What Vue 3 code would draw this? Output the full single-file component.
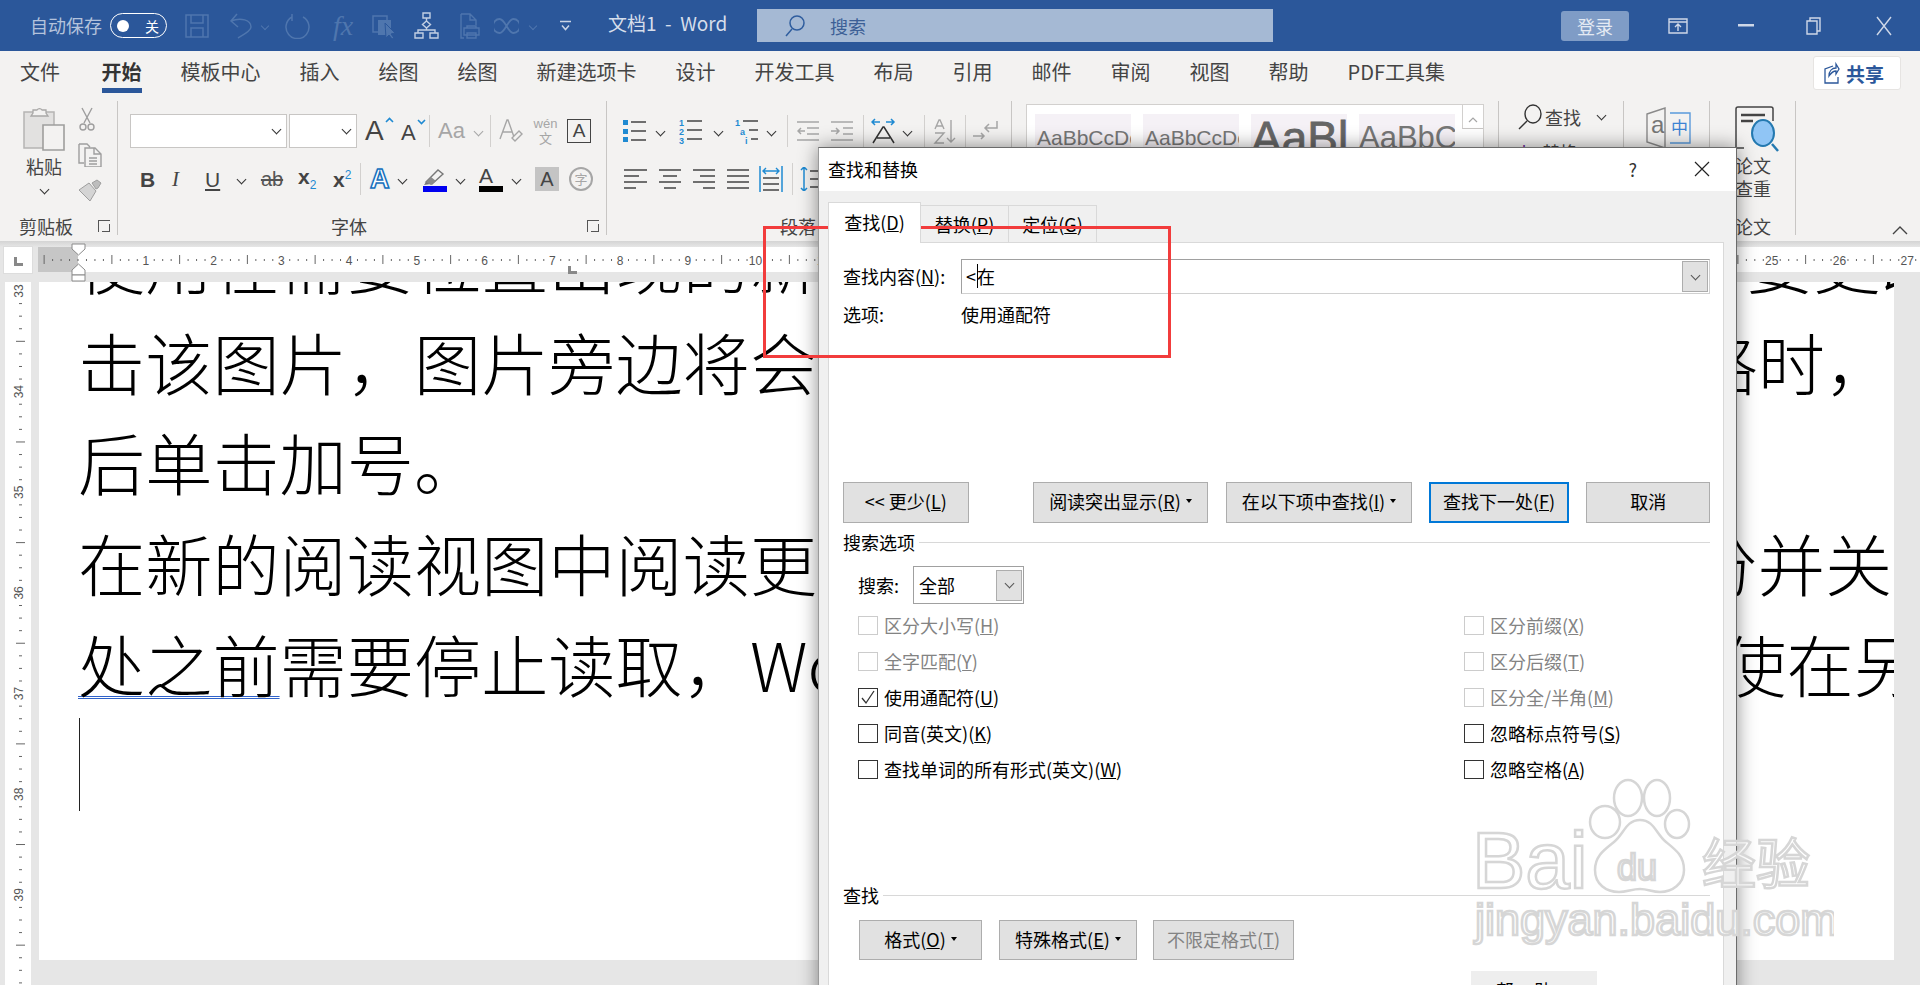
<script setup>
const tabs = ["文件", "开始", "模板中心", "插入", "绘图", "绘图", "新建选项卡", "设计", "开发工具", "布局", "引用", "邮件", "审阅", "视图", "帮助", "PDF工具集"];

// ruler ticks, 8 per unit; the number sits on the unit and the long tick halfway
const hTicks = [];
for (let k = -4; k < 222; k++) {
	hTicks.push({ k, x: 40 + (k * 67.75) / 8, num: k % 8 === 0 && k > 0 ? k / 8 : null, long: Math.abs(k % 8) === 4 });
}
const vTicks = [];
for (let k = -1; k < 56; k++) {
	vTicks.push({ k, y: 9 + k * 12.58, num: k % 8 === 0 ? 33 + k / 8 : null, long: Math.abs(k % 8) === 4 });
}

const options = [
	{ text: "区分大小写", key: "H", off: true },
	{ text: "区分前缀", key: "X", off: true },
	{ text: "全字匹配", key: "Y", off: true },
	{ text: "区分后缀", key: "T", off: true },
	{ text: "使用通配符", key: "U", checked: true },
	{ text: "区分全/半角", key: "M", off: true },
	{ text: "同音(英文)", key: "K" },
	{ text: "忽略标点符号", key: "S" },
	{ text: "查找单词的所有形式(英文)", key: "W" },
	{ text: "忽略空格", key: "A" },
];
</script>

<template>
	<div class="word">
		<header class="titlebar">
			<span class="autosave">自动保存</span>
			<span class="toggle"><i class="knob"></i><b>关</b></span>
			<div class="qat">
				<svg width="24" height="24" viewBox="0 0 24 24" fill="none" stroke="#4f76ae" stroke-width="1.5"><path d="M1 1h22v22H1zM6 1v8h12V1M6 23v-9h12v9" /></svg>
				<svg width="24" height="26" viewBox="0 0 24 26" fill="none" stroke="#4f76ae" stroke-width="1.5"><path d="M8 1 2 8l7 6M2 8c10-4 20-1 20 6 0 4-8 8-13 11" /></svg>
				<i class="chev dim"></i>
				<svg width="25" height="26" viewBox="0 0 25 26" fill="none" stroke="#4f76ae" stroke-width="1.5"><path d="M7 1v7M7 4a11.500 11.500 0 1 0 11 0" /></svg>
				<span class="fx">fx</span>
				<svg width="24" height="26" viewBox="0 0 24 26" fill="none"><path d="M1 3h14v16H1z" stroke="#4f76ae" stroke-width="1.5" /><path d="M6 7h13v15H6z" fill="#4f76ae" /><path d="m13 10 10 10-4 1 3 4-2 1-3-4-3 3z" fill="#4f76ae" stroke="#2b579a" /></svg>
				<svg width="25" height="27" viewBox="0 0 25 27" fill="none" stroke="#c2cfe3" stroke-width="1.4"><path d="M9 1h7v5H9zM12.500 6v3M12.500 9l4 3.500-4 3.500-4-3.500zM12.500 16v2M4 21v-3h17v3M1 21h8v5H1zM16 21h8v5h-8z" /></svg>
				<svg width="22" height="26" viewBox="0 0 22 26" fill="none" stroke="#4f76ae" stroke-width="1.4"><path d="M1 1h9l6 6v5M1 1v24h3M10 1v6h6M7 15v-2h9v2M4 15h15v7H4zM7 20h9v5H7z" /></svg>
				<svg width="25" height="20" viewBox="0 0 25 20" fill="none" stroke="#4f76ae" stroke-width="1.8"><path d="M12.500 10C9 4 7.500 3 5.500 3a6.500 7 0 0 0 0 14c2 0 3.500-1 7-7s5-7 7-7a6.500 7 0 0 1 0 14c-2 0-3.500-1-7-7z" /></svg>
				<i class="chev dim"></i>
				<svg width="13" height="12" viewBox="0 0 13 12" fill="none" stroke="#cbd5e6" stroke-width="1.5"><path d="M1 1.500h11M3 5.500l3.500 4 3.500-4" /></svg>
			</div>
			<span class="doc-name">文档1&nbsp; -&nbsp; Word</span>
			<div class="searchbox">
				<svg width="20" height="22" viewBox="0 0 20 22" fill="none" stroke="#2f5d9e" stroke-width="1.5"><ellipse cx="12" cy="8" rx="7" ry="7" /><path d="M7 14 1 21" /></svg>
				<span>搜索</span>
			</div>
			<span class="login">登录</span>
			<div class="winbtns">
				<svg width="20" height="16" viewBox="0 0 20 16" fill="none" stroke="#cfd8e8" stroke-width="1.4"><path d="M1 1h18v14H1zM1 4h18M10 13V6.500M7 9l3-3 3 3" /></svg>
				<svg width="16" height="3" viewBox="0 0 16 3"><path d="M0 0h16v2.500H0z" fill="#cfd8e8" /></svg>
				<svg width="16" height="18" viewBox="0 0 16 18" fill="none" stroke="#cfd8e8" stroke-width="1.4"><path d="M1 4h10v13H1zM4 4V1h10v13h-3" /></svg>
				<svg width="16" height="20" viewBox="0 0 16 20" fill="none" stroke="#cfd8e8" stroke-width="1.4"><path d="m1 1 14 18M15 1 1 19" /></svg>
			</div>
		</header>

		<nav class="tabs">
			<span v-for="(t, i) in tabs" :key="i" class="tab" :class="{ active: t === '开始' }">{{ t }}</span>
			<span class="share">
				<svg width="16" height="24" viewBox="0 0 16 24" fill="none" stroke="#2b579a" stroke-width="1.3"><path d="M9 5 1 8v14h13v-6M5 15c0-5 3-8 7-8V3l3 5-3 5V10c-3 0-5 2-7 5z" /></svg>
				<b>共享</b>
			</span>
		</nav>

		<section class="ribbon">
			<div class="group g-clip">
				<div class="clip-body">
					<div class="paste">
						<svg width="42" height="45" viewBox="0 0 42 45" fill="none"><path d="M1 6h30v36H1z" fill="#e2e1e0" stroke="#b5b4b3" stroke-width="1.5" /><path d="M10 7V4h4a3 3 0 0 1 5 0h4v3l2 3H8z" fill="#f3f2f1" stroke="#a9a8a7" stroke-width="1.3" /><path d="M20 19h21v25H20z" fill="#f3f2f1" stroke="#9f9e9d" stroke-width="1.6" /></svg>
						<span class="paste-label">粘贴</span>
						<i class="chev"></i>
					</div>
					<div class="clip-tools">
						<svg width="18" height="24" viewBox="0 0 18 24" fill="none" stroke="#9e9e9e" stroke-width="1.4"><path d="M4 1l8 15M14 1 6 16" /><circle cx="5" cy="20" r="3" /><circle cx="13" cy="20" r="3" /></svg>
						<svg width="24" height="24" viewBox="0 0 24 24" fill="none" stroke="#9e9e9e" stroke-width="1.4"><path d="M1 1h8l3 3M1 1v19h5M7 5h10l6 6v13H7zM16 5v6h7M11 15h8M11 18h8M11 21h8" /></svg>
						<svg width="24" height="23" viewBox="0 0 24 23" fill="#bdbdbd" stroke="#9e9e9e" stroke-width="1"><path d="M1 11 11 4l7 8-6 10z" fill="#d4d4d4" /><path d="m14 4 5-3 4 3-3 5-2 1z" /></svg>
					</div>
				</div>
				<div class="glabel"><span class="gtext">剪贴板</span><i class="launcher"></i></div>
			</div>

			<div class="group g-font">
				<div class="font-row1">
					<span class="combo"><i class="chev"></i></span>
					<span class="combo"><i class="chev"></i></span>
					<span class="grow"><span class="glyph big">A</span><svg width="9" height="6" viewBox="0 0 9 6" fill="none" stroke="#1f8ad2" stroke-width="1.6"><path d="m1 5 3.500-3.500L8 5" /></svg></span>
					<span class="grow"><span class="glyph mid">A</span><svg width="9" height="6" viewBox="0 0 9 6" fill="none" stroke="#1f8ad2" stroke-width="1.6"><path d="m1 1 3.500 3.500L8 1" /></svg></span>
					<i class="vsep"></i>
					<span class="glyph aa">Aa</span>
					<i class="chev faint"></i>
					<i class="vsep"></i>
					<svg width="24" height="26" viewBox="0 0 24 26" fill="none"><path d="M1 21 8 2h1l6 17M4 14h9" stroke="#a6a6a6" stroke-width="1.4" /><path d="m13 20 7-7 3 3-7 7z" fill="#f3f2f1" stroke="#a6a6a6" stroke-width="1.4" /></svg>
					<span class="wen"><small>wén</small><em>文</em></span>
					<span class="boxed">A</span>
				</div>
				<div class="font-row2">
					<b class="glyph fmt">B</b>
					<i class="glyph fmt it">I</i>
					<span class="glyph fmt und">U</span>
					<i class="chev"></i>
					<span class="glyph strike">ab</span>
					<span class="glyph fmt xs">x<sub>2</sub></span>
					<span class="glyph fmt xs">x<sup>2</sup></span>
					<i class="vsep short"></i>
					<span class="glyph fx-a">A</span>
					<i class="chev"></i>
					<span class="colorbtn">
						<svg width="22" height="18" viewBox="0 0 22 18" fill="none"><path d="m3 14 12-12 5 4-11 10z" fill="#f3f2f1" stroke="#777" stroke-width="1.4" /><path d="m1 17 2-3 5 2z" fill="#777" /><path d="m3 14 5-5 5 4-5 4z" fill="#8a8a8a" /></svg>
						<i class="bar blue"></i>
					</span>
					<i class="chev"></i>
					<span class="colorbtn"><span class="glyph colour">A</span><i class="bar black"></i></span>
					<i class="chev"></i>
					<span class="shade">A</span>
					<span class="circled">字</span>
				</div>
				<div class="glabel"><span class="gtext font-title">字体</span><i class="launcher"></i></div>
			</div>

			<div class="group g-para">
				<div class="para-row1">
					<svg width="23" height="24" viewBox="0 0 23 24" fill="none"><path d="M0 1h5v5H0zM0 10h5v5H0zM0 18h5v5H0z" fill="#1f8ad2" /><path d="M8 3h15M8 12h15M8 21h15" stroke="#444" stroke-width="1.5" /></svg>
					<i class="chev"></i>
					<svg width="23" height="26" viewBox="0 0 23 26" fill="none"><text x="0" y="8" class="tiny">1</text><text x="0" y="17" class="tiny">2</text><text x="0" y="26" class="tiny">3</text><path d="M8 3h15M8 12h15M8 21h15" stroke="#444" stroke-width="1.5" /></svg>
					<i class="chev"></i>
					<svg width="23" height="26" viewBox="0 0 23 26" fill="none"><text x="0" y="8" class="tiny">1</text><text x="5" y="17" class="tiny">a</text><text x="10" y="26" class="tiny">i</text><path d="M8 3h15M14 12h9M16 21h7" stroke="#444" stroke-width="1.5" /></svg>
					<i class="chev"></i>
					<i class="vsep"></i>
					<svg width="22" height="20" viewBox="0 0 22 20" fill="none" stroke="#a6a6a6" stroke-width="1.5"><path d="M0 1h22M10 7h12M10 13h12M0 19h22M8 10H1M4 7l-3 3 3 3" /></svg>
					<svg width="22" height="20" viewBox="0 0 22 20" fill="none" stroke="#a6a6a6" stroke-width="1.5"><path d="M0 1h22M12 7h10M12 13h10M0 19h22M0 10h8M5 7l3 3-3 3" /></svg>
					<i class="vsep"></i>
					<svg width="25" height="26" viewBox="0 0 25 26" fill="none"><path d="M2 25 12 9h1l10 16M6 20h13" stroke="#333" stroke-width="1.5" /><path d="M1 4h8M4 1 1 4l3 3M15 4h8M20 1l3 3-3 3" stroke="#1f8ad2" stroke-width="1.5" /></svg>
					<i class="chev"></i>
					<i class="vsep"></i>
					<svg width="24" height="26" viewBox="0 0 24 26" fill="none" stroke="#a6a6a6" stroke-width="1.4"><path d="M2 11 6 2h1l4 9M3 8h7M2 15h9l-9 10h9M18 2v22M14 20l4 4 4-4" /></svg>
					<i class="vsep"></i>
					<svg width="25" height="22" viewBox="0 0 25 22" fill="none" stroke="#a6a6a6" stroke-width="1.5"><path d="M24 1v7H12M16 4l-4 4 4 4M0 16h11M8 13l3 3-3 3" /></svg>
				</div>
				<div class="para-row2">
					<svg width="23" height="22" viewBox="0 0 23 22" fill="none" stroke="#444" stroke-width="1.5"><path d="M0 2h23M0 8h15M0 14h23M0 20h12" /></svg>
					<svg width="22" height="22" viewBox="0 0 22 22" fill="none" stroke="#444" stroke-width="1.5"><path d="M0 2h22M4 8h14M0 14h22M5 20h12" /></svg>
					<svg width="22" height="22" viewBox="0 0 22 22" fill="none" stroke="#444" stroke-width="1.5"><path d="M0 2h22M7 8h15M0 14h22M10 20h12" /></svg>
					<svg width="22" height="22" viewBox="0 0 22 22" fill="none" stroke="#444" stroke-width="1.5"><path d="M0 2h22M0 8h22M0 14h22M0 20h22" /></svg>
					<svg width="24" height="26" viewBox="0 0 24 26" fill="none"><path d="M1 0v26M23 0v26" stroke="#1f8ad2" stroke-width="1.5" /><path d="M4 5h16M7 2 4 5l3 3M17 2l3 3-3 3" stroke="#1f8ad2" stroke-width="1.4" /><path d="M4 12h16M4 18h16M4 24h16" stroke="#444" stroke-width="1.5" /></svg>
					<i class="vsep short"></i>
					<svg width="18" height="24" viewBox="0 0 18 24" fill="none"><path d="M4 0v24M1 3l3-3 3 3M1 21l3 3 3-3" stroke="#1f8ad2" stroke-width="1.5" /><path d="M10 4h8M10 12h8M10 20h8" stroke="#444" stroke-width="1.5" /></svg>
				</div>
				<div class="glabel"><span class="gtext para-title">段落</span><i class="launcher"></i></div>
			</div>

			<div class="group g-styles">
				<div class="gallery">
					<span class="style-card s-small">AaBbCcDc</span>
					<span class="style-card s-small">AaBbCcDc</span>
					<span class="style-card s-huge">AaBl</span>
					<span class="style-card s-large">AaBbC</span>
					<span class="gallery-scroll">
						<svg width="10" height="6" viewBox="0 0 10 6" fill="none" stroke="#a6a6a6" stroke-width="1.2"><path d="m1 5 4-4 4 4" /></svg>
					</span>
				</div>
			</div>

			<div class="group g-edit">
				<div class="edit-row">
					<svg width="24" height="26" viewBox="0 0 24 26" fill="none" stroke="#333" stroke-width="1.4"><ellipse cx="15" cy="10" rx="8" ry="9" /><path d="M9 17 1 25" /></svg>
					<span>查找</span>
					<i class="chev"></i>
				</div>
				<div class="edit-row second">
					<span class="ab-b">b</span>
					<span>替换</span>
				</div>
			</div>

			<div class="group g-trans">
				<svg width="45" height="42" viewBox="0 0 45 42" fill="none"><path d="M1 7 19 1v40L1 35z" fill="#f3f2f1" stroke="#8a8a8a" stroke-width="1.4" /><text x="5" y="26" class="trans-a">a</text><path d="M24 6h20v30H24" stroke="#5a9bdc" stroke-width="1.4" /><text x="25" y="27" class="trans-z">中</text></svg>
			</div>

			<div class="group g-paper">
				<svg class="paper-icon" width="44" height="46" viewBox="0 0 44 46" fill="none"><path d="M1 42V3q0-2 2-2h33q2 0 2 2v12M1 42h8" stroke="#444" stroke-width="1.5" /><path d="M6 9h24" stroke="#444" stroke-width="2.500" /><path d="M6 15h12" stroke="#444" stroke-width="2.500" /><ellipse cx="28" cy="27" rx="11" ry="13" fill="#90c5f5" stroke="#2479b0" stroke-width="2" /><path d="m37 38 6 7" stroke="#2479b0" stroke-width="2.500" /></svg>
				<span class="paper-text">论文<br />查重</span>
				<div class="glabel"><span class="gtext">论文</span></div>
			</div>

			<div class="collapse">
				<svg width="16" height="9" viewBox="0 0 16 9" fill="none" stroke="#444" stroke-width="1.4"><path d="m1 8 7-7 7 7" /></svg>
			</div>
		</section>

		<div class="ruler-row">
			<div class="ruler-corner"><i class="ruler-l"></i></div>
			<svg class="h-ruler" width="1882" height="41" viewBox="0 0 1882 41">
				<rect x="0" y="6" width="1882" height="25" fill="#fff" />
				<rect x="0" y="6" width="40" height="25" fill="#c6c6c6" />
				<template v-for="t in hTicks" :key="t.k">
					<text v-if="t.num" :x="t.x" y="24" class="rnum" text-anchor="middle">{{ t.num }}</text>
					<rect v-else :x="t.x - 0.5" :y="t.long ? 14 : 18" width="1" :height="t.long ? 9 : 2" fill="#666" />
				</template>
				<path d="M34 3h13v5l-6.500 6-6.500-6z" fill="#fff" stroke="#8a8a8a" />
				<path d="m40.500 23 6.500 6v5H34v-5z" fill="#fff" stroke="#8a8a8a" />
				<path d="M34 34h13v6H34z" fill="#fff" stroke="#8a8a8a" />
				<path d="M530 25h3v5h6v3h-9z" fill="#888" />
			</svg>
		</div>

		<div class="work">
			<svg class="v-ruler" width="26" height="703" viewBox="0 0 26 703">
				<template v-for="t in vTicks" :key="t.k">
					<text v-if="t.num" x="14" :y="t.y" class="rnum" text-anchor="middle" dominant-baseline="central" :transform="`rotate(-90 14 ${t.y})`">{{ t.num }}</text>
					<rect v-else :x="t.long ? 11 : 14" :y="t.y - 0.5" :width="t.long ? 9 : 3" height="1" fill="#666" />
				</template>
			</svg>
			<main class="page">
				<p class="line wide-a">使用在需要位置出现的新按钮在 Word 中节省时间。若要更改图片适应文档的方式，请单</p>
				<p class="line">击该图片，图片旁边将会显示布局选项按钮。当处理表格时，单击要添加行或列的位置，然</p>
				<p class="line">后单击加号。</p>
				<p class="line">在新的阅读视图中阅读更加容易。可以折叠文档某些部分并关注所需文本。如果在达到结尾</p>
				<p class="line wide-b"><span class="grammar">处之前</span>需要停止读取，Word 会记住您的停止位置 - 即使在另一个设备上。</p>
				<i class="caret"></i>
			</main>
		</div>

		<div class="dialog">
			<div class="dlg-title">
				<span>查找和替换</span>
				<span class="dlg-help">?</span>
				<svg width="16" height="16" viewBox="0 0 16 16" fill="none" stroke="#222" stroke-width="1.2"><path d="m1 1 14 14M15 1 1 15" /></svg>
			</div>
			<div class="dlg-tabs">
				<span class="dlg-tab current">查找(<u>D</u>)</span>
				<span class="dlg-tab">替换(<u>P</u>)</span>
				<span class="dlg-tab">定位(<u>G</u>)</span>
			</div>
			<div class="dlg-page">
				<div class="find-row">
					<span class="find-label">查找内容(<u>N</u>):</span>
					<div class="find-input">
						<span class="find-value">&lt;<i class="find-caret"></i>在</span>
						<span class="drop"><i class="chev thin"></i></span>
					</div>
				</div>
				<div class="find-row opt-row">
					<span>选项:</span>
					<span>使用通配符</span>
				</div>

				<div class="btn-row">
					<button type="button" class="btn less">&lt;&lt; 更少(<u>L</u>)</button>
					<button type="button" class="btn highlight">阅读突出显示(<u>R</u>)<i class="tri"></i></button>
					<button type="button" class="btn within">在以下项中查找(<u>I</u>)<i class="tri"></i></button>
					<button type="button" class="btn next">查找下一处(<u>F</u>)</button>
					<button type="button" class="btn cancel">取消</button>
				</div>

				<div class="legend"><span>搜索选项</span><i></i></div>
				<div class="scope-row">
					<span class="scope-label">搜索:</span>
					<div class="scope-select"><span>全部</span><span class="drop"><i class="chev thin"></i></span></div>
				</div>
				<div class="checks">
					<label v-for="o in options" :key="o.key" class="check" :class="{ off: o.off }">
						<span class="box">
							<svg v-if="o.checked" width="16" height="15" viewBox="0 0 16 15" fill="none" stroke="#333" stroke-width="1.3"><path d="m2 8 4 5 8-12" /></svg>
						</span>
						<span>{{ o.text }}(<u>{{ o.key }}</u>)</span>
					</label>
				</div>

				<div class="legend find-legend"><span>查找</span><i></i></div>
				<div class="format-row">
					<button type="button" class="btn fmt-btn f1">格式(<u>O</u>)<i class="tri"></i></button>
					<button type="button" class="btn fmt-btn f2">特殊格式(<u>E</u>)<i class="tri"></i></button>
					<button type="button" class="btn fmt-btn f3" disabled>不限定格式(<u>T</u>)</button>
				</div>
				<div class="cutoff"><span>帮助</span></div>
			</div>
		</div>

		<div class="red-box"></div>

		<svg class="watermark" width="362" height="170" viewBox="0 0 362 170">
			<g fill="#fff" fill-opacity="0.7" stroke="#d6d6d6" stroke-width="2.500">
				<ellipse cx="133" cy="44" rx="15" ry="16" />
				<ellipse cx="156" cy="20" rx="14" ry="18" />
				<ellipse cx="185" cy="20" rx="13" ry="18" />
				<ellipse cx="205" cy="46" rx="12" ry="14" />
				<path d="M168 42c14 0 16 14 26 22 10 8 18 14 18 28 0 14-12 22-24 22-8 0-12-3-20-3s-13 3-21 3c-13 0-24-8-24-22 0-14 9-20 19-28 10-8 12-22 26-22z" />
				<text x="0" y="110" class="wm-bai">Bai</text>
				<text x="145" y="102" class="wm-du">du</text>
				<text x="230" y="106" class="wm-cn">经验</text>
				<text x="3" y="157" class="wm-url">jingyan.baidu.com</text>
			</g>
		</svg>
	</div>
</template>

<style scoped>
.word {
	position: relative;
	width: 1920px;
	height: 985px;
	overflow: hidden;
	background: #e6e6e6;
	font-family: "Noto Sans CJK SC", "Liberation Sans", sans-serif;
	color: #444;
}

i {
	font-style: normal;
}

/* title bar */
.titlebar {
	display: flex;
	align-items: center;
	height: 51px;
	background: #2b579a;
	font-size: 18px;
	line-height: 24px;
}

.autosave {
	margin-left: 30px;
	margin-bottom: 1px;
	color: #b4c3dc;
}

.toggle {
	display: flex;
	align-items: center;
	box-sizing: border-box;
	width: 57px;
	height: 25px;
	margin-left: 8px;
	padding: 0 7px 0 6px;
	justify-content: space-between;
	border: 1.5px solid #fff;
	border-radius: 13px;
	color: #fff;
	font-size: 14px;
}

.toggle b {
	font-weight: 400;
}

.knob {
	width: 12px;
	height: 12px;
	border-radius: 50%;
	background: #fff;
}

.qat {
	display: grid;
	grid-template-columns: 44px 30px 26px 48px 39px 42px 46px 34px 33px 32px 33px;
	align-items: center;
	justify-items: start;
	margin-left: 18px;
	width: 407px;
}

.fx {
	font: italic 28px/26px "Liberation Serif", serif;
	color: #4f76ae;
}

.doc-name {
	margin-left: 16px;
	margin-bottom: 5px;
	width: 149px;
	color: #d6deeb;
	font-size: 19px;
	white-space: nowrap;
}

.searchbox {
	display: flex;
	align-items: center;
	gap: 25px;
	box-sizing: border-box;
	width: 516px;
	height: 33px;
	padding-left: 28px;
	background: #a5b9d4;
	color: #3c5f96;
}

.login {
	margin-left: 288px;
	box-sizing: border-box;
	width: 68px;
	height: 30px;
	line-height: 30px;
	text-align: center;
	border-radius: 3px;
	background: #7f9cc6;
	color: #e4eaf3;
}

.winbtns {
	display: grid;
	grid-template-columns: 70px 68px 70px 30px;
	align-items: center;
	justify-items: start;
	margin-left: 39px;
}

/* tabs */
.tabs {
	position: relative;
	display: flex;
	gap: 39px;
	height: 42px;
	padding-left: 20px;
	background: #f3f2f1;
	font-size: 20px;
}

.tab {
	position: relative;
	height: 37px;
	line-height: 42px;
	white-space: nowrap;
}

.tab:first-child {
	margin-right: 2.5px;
}

.tab.active {
	font-weight: 700;
	color: #333;
	border-bottom: 5px solid #2b579a;
}

.share {
	display: flex;
	align-items: center;
	gap: 6px;
	box-sizing: border-box;
	width: 88px;
	height: 34px;
	margin: 5px 0 0 auto;
	margin-right: 19px;
	padding-left: 10px;
	background: #fff;
	border: 1px solid #e6e4e2;
	border-radius: 3px;
	color: #2b579a;
	font-size: 19px;
}

/* ribbon */
.ribbon {
	display: flex;
	box-sizing: border-box;
	height: 148px;
	padding: 8px 0 6px;
	background: #f3f2f1;
}

.group {
	position: relative;
	display: flex;
	flex-direction: column;
	box-sizing: border-box;
	border-right: 1px solid #c8c6c4;
}

.glabel {
	display: flex;
	align-items: center;
	height: 20px;
	margin-top: auto;
	margin-bottom: -1px;
	font-size: 18px;
	line-height: 20px;
}

.launcher {
	position: relative;
	width: 12px;
	height: 12px;
	margin-left: auto;
	margin-right: 7px;
	border-top: 1px solid #555;
	border-left: 1px solid #555;
	box-sizing: border-box;
}

.launcher::after {
	content: "";
	position: absolute;
	right: 0;
	bottom: 0;
	width: 7px;
	height: 7px;
	border-right: 1.5px solid #555;
	border-bottom: 1.5px solid #555;
}

.chev {
	display: block;
	box-sizing: border-box;
	width: 7px;
	height: 7px;
	margin-left: 3px;
	border-right: 1.5px solid #333;
	border-bottom: 1.5px solid #333;
	transform: rotate(45deg);
}

.chev.dim {
	width: 6px;
	height: 6px;
	border-color: #4f76ae;
}

.chev.faint {
	border-color: #a6a6a6;
}

.chev.thin {
	margin: 0;
	border-width: 1px;
	border-color: #555;
}

.vsep {
	display: block;
	width: 1px;
	height: 32px;
	background: #d2d0ce;
}

.vsep.short {
	height: 32px;
}

.glyph {
	font-family: "Liberation Sans", sans-serif;
	line-height: 1;
	color: #444;
}

.g-clip {
	width: 118px;
	padding-left: 19px;
}

.clip-body {
	display: flex;
}

.paste {
	display: flex;
	flex-direction: column;
	align-items: center;
	width: 50px;
	padding-top: 5px;
}

.paste-label {
	margin-top: 3px;
	font-size: 18px;
	line-height: 24px;
}

.paste .chev {
	margin: 8px 0 0;
}

.clip-tools {
	display: flex;
	flex-direction: column;
	align-items: flex-start;
	gap: 12px;
	margin-left: 9px;
	padding-top: 6px;
}

.g-font {
	width: 489px;
	padding-left: 12px;
}

.font-row1 {
	display: grid;
	grid-template-columns: 159px 76px 36px 28px 9px 34px 18px 9px 35px 33px 24px;
	align-items: center;
	justify-items: start;
	margin-top: 13px;
	height: 34px;
}

.combo {
	display: flex;
	align-items: center;
	justify-content: flex-end;
	box-sizing: border-box;
	height: 34px;
	padding: 0 6px 3px 0;
	background: #fff;
	border: 1px solid #c8c6c4;
}

.combo:nth-child(1) {
	width: 157px;
}

.combo:nth-child(2) {
	width: 68px;
}

.grow {
	display: flex;
	align-items: flex-start;
	gap: 1px;
}

.big {
	font-size: 28px;
}

.mid {
	font-size: 22px;
	margin-top: 3px;
}

.aa {
	font-size: 22px;
	color: #a6a6a6;
}

.wen {
	display: flex;
	flex-direction: column;
	align-items: center;
	width: 23px;
	color: #a6a6a6;
	line-height: 12px;
}

.wen small {
	font: 13px/13px "Liberation Sans", sans-serif;
}

.wen em {
	font-style: normal;
	font-size: 13px;
	line-height: 15px;
}

.boxed {
	box-sizing: border-box;
	width: 24px;
	height: 24px;
	border: 1.5px solid #444;
	font: 19px/22px "Liberation Sans", sans-serif;
	text-align: center;
}

.font-row2 {
	display: grid;
	grid-template-columns: 32px 33px 30px 24px 39px 35px 27px 10px 26px 27px 31px 25px 31px 25px 34px 24px;
	align-items: center;
	justify-items: start;
	margin: 15px 0 0 10px;
	height: 26px;
}

.fmt {
	font-size: 21px;
}

.it {
	font-family: "Liberation Serif", serif;
	font-style: italic;
}

.und {
	text-decoration: underline;
	text-underline-offset: 2px;
}

.strike {
	font-size: 20px;
	width: 26px;
	text-align: center;
	text-decoration: line-through;
	color: #555;
}

.xs {
	font-weight: 700;
}

.xs sub,
.xs sup {
	font-size: 12px;
	color: #1f8ad2;
	font-weight: 400;
}

.fx-a {
	font-size: 27px;
	font-weight: 700;
	color: #fff;
	-webkit-text-stroke: 1.5px #1570bd;
	text-shadow: 0 0 2px #7cc0f0;
}

.colorbtn {
	display: flex;
	flex-direction: column;
	align-items: flex-start;
	justify-content: flex-end;
	width: 24px;
	height: 26px;
}

.colour {
	font-size: 21px;
	line-height: 20px;
}

.bar {
	width: 24px;
	height: 6px;
	flex: none;
}

.blue {
	background: #0000f0;
}

.black {
	background: #000;
}

.shade {
	width: 24px;
	height: 24px;
	background: #c4c4c4;
	font: 20px/24px "Liberation Sans", sans-serif;
	text-align: center;
}

.circled {
	box-sizing: border-box;
	width: 24px;
	height: 24px;
	border: 2px solid #a6a6a6;
	border-radius: 50%;
	color: #a6a6a6;
	font-size: 13px;
	line-height: 20px;
	text-align: center;
}

.font-title {
	margin-left: 201px;
}

.g-para {
	width: 405px;
	padding-left: 16px;
}

.para-row1 {
	display: grid;
	grid-template-columns: 31px 25px 33px 23px 30px 22px 10px 34px 32px 8px 30px 23px 9px 32px 8px 25px;
	align-items: center;
	justify-items: start;
	margin-top: 13px;
	height: 34px;
}

.para-row2 {
	display: grid;
	grid-template-columns: 35px 34px 34px 32px 33px 8px 20px;
	align-items: center;
	justify-items: start;
	margin: 15px 0 0 1px;
	height: 26px;
}

.tiny {
	font: 700 9px "Liberation Sans", sans-serif;
	fill: #1f8ad2;
}

.para-title {
	margin-left: 157px;
}

.g-styles {
	width: 487px;
	padding-left: 14px;
}

.gallery {
	display: flex;
	gap: 12px;
	box-sizing: border-box;
	width: 458px;
	height: 70px;
	margin-top: 3px;
	padding: 9px 0 0 8px;
	background: #fff;
	border: 1px solid #d2d0ce;
}

.style-card {
	flex: none;
	width: 96px;
	height: 60px;
	overflow: hidden;
	background: #f5f1f6;
	color: #777;
	font-family: "Liberation Sans", sans-serif;
	white-space: nowrap;
}

.s-small {
	padding-left: 2px;
	width: 94px;
	font-size: 21px;
	line-height: 48px;
}

.s-huge {
	font-size: 46px;
	line-height: 48px;
	-webkit-text-stroke: 0.8px #666;
	color: #666;
}

.s-large {
	font-size: 31px;
	line-height: 47px;
}

.gallery-scroll {
	display: flex;
	justify-content: center;
	box-sizing: border-box;
	width: 22px;
	height: 24px;
	margin: -9px 0 0 -5px;
	padding-top: 12px;
	border-left: 1px solid #d2d0ce;
	border-bottom: 1px solid #c8c6c4;
}

.g-edit {
	width: 125px;
	padding-left: 19px;
}

.edit-row {
	display: flex;
	align-items: center;
	height: 26px;
	margin-top: 3px;
	font-size: 18px;
	gap: 3px;
}

.edit-row .chev {
	margin-left: 14px;
	margin-bottom: 4px;
}

.edit-row.second {
	margin: 9px 0 0 4px;
	gap: 10px;
}

.ab-b {
	color: #7030a0;
	font-family: "Liberation Sans", sans-serif;
}

.g-trans {
	width: 86px;
	padding: 6px 0 0 22px;
}

.trans-a {
	font: 24px "Liberation Sans", sans-serif;
	fill: #777;
}

.trans-z {
	font-size: 17px;
	fill: #3c83d4;
}

.g-paper {
	width: 86px;
	padding-left: 25px;
}

.paper-icon {
	margin-top: 5px;
}

.paper-text {
	margin-top: 2px;
	font-size: 18px;
	line-height: 23px;
}

.collapse {
	display: flex;
	align-items: flex-end;
	justify-content: flex-end;
	flex: 1;
	padding: 0 12px 0 0;
}

/* rulers */
.ruler-row {
	display: flex;
	height: 41px;
	background: linear-gradient(#d4d4d4, #e6e6e6 6px);
}

.ruler-corner {
	display: flex;
	align-items: flex-end;
	box-sizing: border-box;
	width: 30px;
	height: 28px;
	margin: 5px 5px 0 3px;
	padding: 0 0 7px 10px;
	background: #fff;
	border: 1px solid #ddd;
}

.ruler-l {
	width: 9px;
	height: 9px;
	border-left: 3px solid #888;
	border-bottom: 3px solid #888;
	box-sizing: border-box;
}

.h-ruler {
	flex: none;
	overflow: visible;
}

.rnum {
	font: 12px "Liberation Sans", sans-serif;
	fill: #555;
}

.work {
	display: flex;
	height: 703px;
}

.v-ruler {
	flex: none;
	margin-left: 5px;
	background: #fff;
}

.page {
	box-sizing: border-box;
	flex: none;
	width: 1855px;
	height: 678px;
	margin-left: 8px;
	padding: 0 0 0 39px;
	overflow: hidden;
	background: #fff;
	color: #000;
}

.line {
	margin: 0;
	height: 100.7px;
	font-size: 67.2px;
	font-weight: 300;
	line-height: 100.7px;
	white-space: nowrap;
	position: relative;
	top: -72px;
}

.wide-a {
	word-spacing: 33px;
}

.wide-b {
	word-spacing: 23px;
}

.grammar {
	text-decoration: underline double #2f62c9 1px;
	text-underline-offset: 4px;
}

.caret {
	display: block;
	position: relative;
	left: 1px;
	top: -67px;
	width: 1px;
	height: 93px;
	background: #222;
}

/* find dialog */
.dialog {
	position: absolute;
	left: 818px;
	top: 147px;
	box-sizing: border-box;
	width: 919px;
	height: 860px;
	background: #f0f0f0;
	border: 1px solid #6b6b6b;
	border-left-color: #9a9a9a;
	box-shadow: 0 0 18px rgba(0, 0, 0, 0.45);
	color: #000;
	font-size: 18px;
	line-height: 22px;
}

.dlg-title {
	display: flex;
	align-items: center;
	box-sizing: border-box;
	height: 43px;
	padding: 0 26px 2px 9px;
	background: #fff;
	font-size: 18px;
}

.dlg-help {
	margin-left: auto;
	margin-right: 57px;
	color: #333;
}

.dlg-tabs {
	display: flex;
	align-items: flex-end;
	height: 51px;
	padding-left: 9px;
}

.dlg-tab {
	box-sizing: border-box;
	width: 88px;
	height: 37px;
	line-height: 36px;
	text-align: center;
	border: 1px solid #d9d9d9;
	border-bottom: none;
	border-left: none;
}

.dlg-tab.current {
	position: relative;
	z-index: 1;
	width: 93px;
	height: 41px;
	margin-bottom: -1px;
	background: #fff;
	border-left: 1px solid #d9d9d9;
	line-height: 38px;
}

.dlg-page {
	box-sizing: border-box;
	width: 896px;
	height: 800px;
	margin-left: 9px;
	padding: 16px 13px 0 14px;
	background: #fff;
	border: 1px solid #d9d9d9;
}

.find-row {
	display: grid;
	grid-template-columns: 118px 1fr;
	align-items: center;
	height: 35px;
}

.find-label {
	padding-bottom: 2px;
}

.find-input {
	position: relative;
	display: flex;
	align-items: center;
	box-sizing: border-box;
	height: 35px;
	padding-left: 4px;
	border: 1px solid #a0a0a0;
	border-right-color: #d0d0d0;
	border-bottom-color: #d0d0d0;
}

.find-value {
	display: inline-flex;
	align-items: center;
	padding-bottom: 2px;
}

.find-caret {
	width: 1px;
	height: 24px;
	margin: 0 -1px 0 1px;
	background: #000;
}

.drop {
	display: flex;
	align-items: center;
	justify-content: center;
	box-sizing: border-box;
	width: 26px;
	height: 31px;
	margin-left: auto;
	margin-right: 1px;
	padding-bottom: 3px;
	background: #e1e1e1;
	border: 1px solid #adadad;
}

.opt-row {
	height: 20px;
	margin-top: 9px;
}

.btn-row {
	display: flex;
	margin-top: 159px;
}

.btn {
	display: flex;
	align-items: center;
	justify-content: center;
	box-sizing: border-box;
	height: 41px;
	padding: 0 0 3px;
	background: #e1e1e1;
	border: 1.5px solid #adadad;
	color: #000;
	font: inherit;
	white-space: nowrap;
}

.less {
	width: 126px;
}

.highlight {
	width: 176px;
	margin-left: 64px;
}

.within {
	width: 186px;
	margin-left: 18px;
}

.next {
	width: 141px;
	margin-left: 17px;
	border: 2.5px solid #0078d7;
}

.cancel {
	width: 124px;
	margin-left: 17px;
}

.tri {
	width: 0;
	height: 0;
	margin-left: 5px;
	border-left: 3.5px solid transparent;
	border-right: 3.5px solid transparent;
	border-top: 4px solid #000;
}

.legend {
	display: flex;
	align-items: center;
	height: 20px;
	margin-top: 9px;
	gap: 4px;
}

.legend i {
	flex: 1;
	height: 1px;
	background: #d8d8d8;
}

.scope-row {
	display: flex;
	align-items: center;
	height: 38px;
	margin: 14px 0 0 15px;
}

.scope-label {
	width: 55px;
}

.scope-select {
	display: flex;
	align-items: center;
	box-sizing: border-box;
	width: 111px;
	height: 38px;
	padding-left: 5px;
	border: 1px solid #a0a0a0;
}

.checks {
	display: grid;
	grid-template-columns: 606px 1fr;
	grid-auto-rows: 36px;
	margin: 3px 0 0 15px;
}

.check {
	display: flex;
	align-items: center;
	gap: 6px;
}

.box {
	display: flex;
	align-items: center;
	justify-content: center;
	box-sizing: border-box;
	width: 20px;
	height: 19px;
	border: 1px solid #333;
}

.check.off {
	color: #838383;
}

.check.off .box {
	border-color: #ccc;
}

.find-legend {
	margin-top: 98px;
}

.format-row {
	display: flex;
	align-items: flex-end;
	margin: 15px 0 0 16px;
}

.fmt-btn {
	height: 40px;
}

.f1 {
	width: 123px;
}

.f2 {
	width: 138px;
	margin-left: 17px;
}

.f3 {
	width: 141px;
	margin-left: 16px;
	color: #838383;
}

.cutoff {
	width: 126px;
	height: 40px;
	margin: 11px 0 0 628px;
	overflow: hidden;
	background: #eee;
	text-align: center;
	line-height: 38px;
	letter-spacing: 20px;
}

.red-box {
	position: absolute;
	left: 763px;
	top: 226px;
	box-sizing: border-box;
	width: 408px;
	height: 132px;
	border: 3px solid #f23c3c;
}

.watermark {
	position: absolute;
	left: 1472px;
	top: 778px;
	pointer-events: none;
}

.wm-bai {
	font: 80px "Liberation Sans", sans-serif;
}

.wm-du {
	font: 36px "Liberation Sans", sans-serif;
}

.wm-cn {
	font-size: 54px;
	font-family: "Noto Sans CJK SC", sans-serif;
}

.wm-url {
	font: 45px "Liberation Sans", sans-serif;
}
</style>
